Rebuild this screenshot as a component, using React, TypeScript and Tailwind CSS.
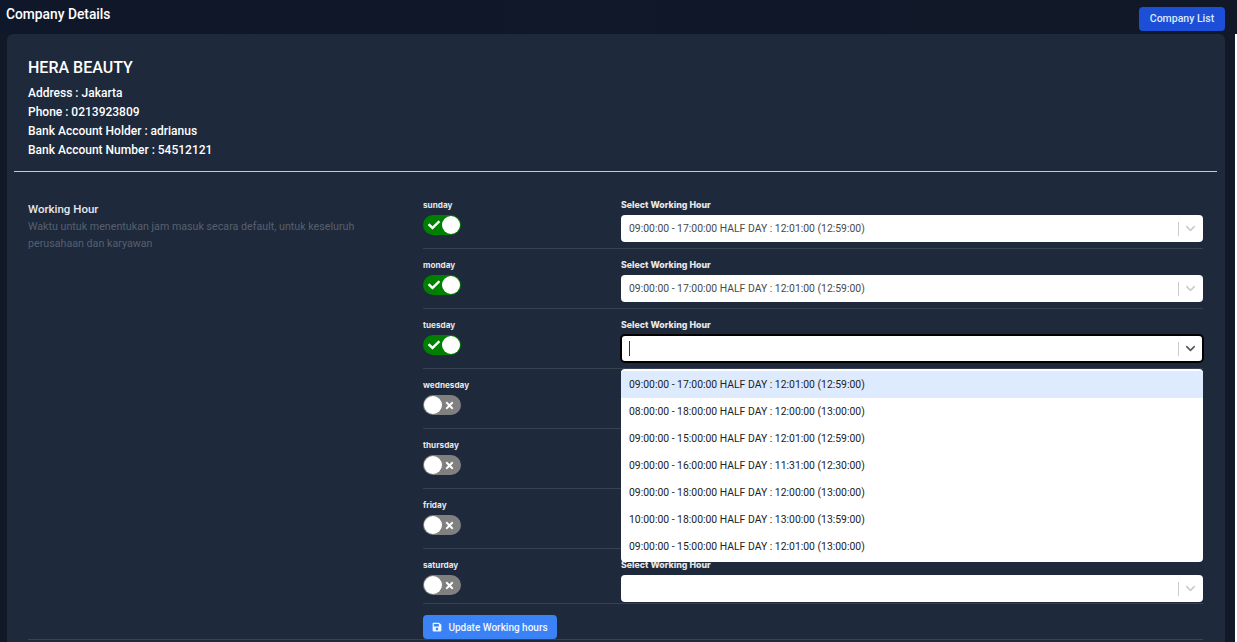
import { ChevronDown } from "lucide-react";
import { FaCheck, FaSave, FaTimes } from "react-icons/fa";

const value = "09:00:00 - 17:00:00 HALF DAY : 12:01:00 (12:59:00)";

const days = [
  { name: "sunday", on: true, text: value },
  { name: "monday", on: true, text: value },
  { name: "tuesday", on: true, text: "", open: true },
  { name: "wednesday", on: false, text: "" },
  { name: "thursday", on: false, text: "" },
  { name: "friday", on: false, text: "" },
  { name: "saturday", on: false, text: "" },
];

const options = [
  "09:00:00 - 17:00:00 HALF DAY : 12:01:00 (12:59:00)",
  "08:00:00 - 18:00:00 HALF DAY : 12:00:00 (13:00:00)",
  "09:00:00 - 15:00:00 HALF DAY : 12:01:00 (12:59:00)",
  "09:00:00 - 16:00:00 HALF DAY : 11:31:00 (12:30:00)",
  "09:00:00 - 18:00:00 HALF DAY : 12:00:00 (13:00:00)",
  "10:00:00 - 18:00:00 HALF DAY : 13:00:00 (13:59:00)",
  "09:00:00 - 15:00:00 HALF DAY : 12:01:00 (13:00:00)",
];

function Toggle({ on }: { on: boolean }) {
  if (on) {
    return (
      <div className="flex h-[20px] w-[38px] items-center justify-between rounded-full bg-[#008000] pl-[5px] pr-[1px]">
        <FaCheck size={12} className="text-white" />
        <div className="h-[18px] w-[18px] rounded-full bg-white" />
      </div>
    );
  }
  return (
    <div className="flex h-[20px] w-[38px] items-center justify-between rounded-full bg-[#808080] pl-[1px] pr-[6px]">
      <div className="h-[18px] w-[18px] rounded-full bg-white" />
      <FaTimes size={11} className="text-white" />
    </div>
  );
}

function Select({ text, open }: { text: string; open?: boolean }) {
  return (
    <div
      className={`flex h-[27px] items-center rounded bg-white pl-2 pr-[3px] ${
        open ? "outline outline-2 -outline-offset-1 outline-black" : ""
      }`}
    >
      <div className="flex-1 truncate pt-px text-[10.4px] text-[#4a4a4a]">
        {open ? <span className="inline-block h-[15px] w-px translate-y-[2px] bg-[#333333]" /> : text}
      </div>
      <div className="h-[14px] w-px bg-[#cccccc]" />
      <ChevronDown
        size={15}
        strokeWidth={2.5}
        className={`mr-[2px] ml-[4px] ${open ? "text-[#555555]" : "text-[#cccccc]"}`}
      />
    </div>
  );
}

export default function App() {
  return (
    <div
      className="flex h-[642px] w-[1237px] flex-col overflow-hidden bg-[#111827] text-white"
      style={{ fontFamily: 'Roboto, "Noto Sans", sans-serif' }}
    >
      <div className="flex h-[34px] shrink-0 items-start justify-between bg-gradient-to-r from-[#0f172a] to-[#111827] pl-[6px] pr-[12px]">
        <h1 className="mt-[4px] text-[13.8px] leading-[20px] font-medium">Company Details</h1>
        <button className="mt-[7px] h-[24px] w-[86px] rounded bg-[#1d4ed8] text-[10.5px] font-medium text-[#dbeafe]">
          Company List
        </button>
      </div>

      <div className="flex flex-1 border-r-2 border-white">
        <div className="ml-[7px] w-[1218px] rounded-t-md bg-[#1e293b] pt-[23px]">
          <div className="pl-[21px]">
            <h2 className="text-[16px] leading-[22px] font-medium">HERA BEAUTY</h2>
            <div className="mt-[5px] text-[12px] leading-[19px] font-medium">
              <p>Address : Jakarta</p>
              <p>Phone : 0213923809</p>
              <p>Bank Account Holder : adrianus</p>
              <p>Bank Account Number : 54512121</p>
            </div>
          </div>

          <hr className="mt-[11px] ml-[7px] w-[1203px] border-t border-[#c4c8ce]" />

          <div className="flex pt-[17px] pl-[21px]">
            <div className="w-[395px] shrink-0 pt-[13px]">
              <h3 className="text-[11.5px] leading-[14px] font-medium text-[#e5e7eb]">Working Hour</h3>
              <p className="mt-[2px] w-[345px] text-[10.7px] leading-[17px] text-[#566070]">
                Waktu untuk menentukan jam masuk secara default, untuk keseluruh perusahaan dan karyawan
              </p>
            </div>

            <div className="w-[780px]">
              {days.map((d) => (
                <div
                  key={d.name}
                  className={`relative flex border-b border-[#374151] ${
                    d.name === "saturday" ? "h-[55px]" : "h-[60px]"
                  } ${d.open ? "z-10" : ""}`}
                >
                  <div className="w-[198px] shrink-0 pt-[10px]">
                    <div
                      className="mb-[4px] text-[8.2px] leading-[12px] font-bold text-[#e5e7eb]"
                      style={{ fontFamily: "Inter, sans-serif" }}
                    >
                      {d.name}
                    </div>
                    <Toggle on={d.on} />
                  </div>
                  <div className="relative flex-1 pt-[10px]">
                    <div
                      className="mb-[4px] text-[8.8px] leading-[12px] font-extrabold text-[#e5e7eb]"
                      style={{ fontFamily: "Inter, sans-serif" }}
                    >
                      Select Working Hour
                    </div>
                    <Select text={d.text} open={d.open} />
                    {d.open && (
                      <div className="absolute top-[60px] right-0 left-0 h-[193px] rounded bg-white pt-[2px]">
                        {options.map((o, i) => (
                          <div
                            key={o}
                            className={`flex h-[27px] items-center px-2 text-[10.4px] text-[#222222] ${
                              i === 0 ? "bg-[#deebff]" : ""
                            }`}
                          >
                            {o}
                          </div>
                        ))}
                      </div>
                    )}
                  </div>
                </div>
              ))}
              <button className="mt-[11px] flex h-[24px] w-[134px] items-center justify-center gap-[6px] rounded-sm bg-[#3b82f6] text-[10px] font-medium text-[#eff6ff]">
                <FaSave size={10} />
                Update Working hours
              </button>
            </div>
          </div>
          <hr className="ml-[21px] w-[1175px] border-t border-[#374151]" />
        </div>
      </div>
    </div>
  );
}
